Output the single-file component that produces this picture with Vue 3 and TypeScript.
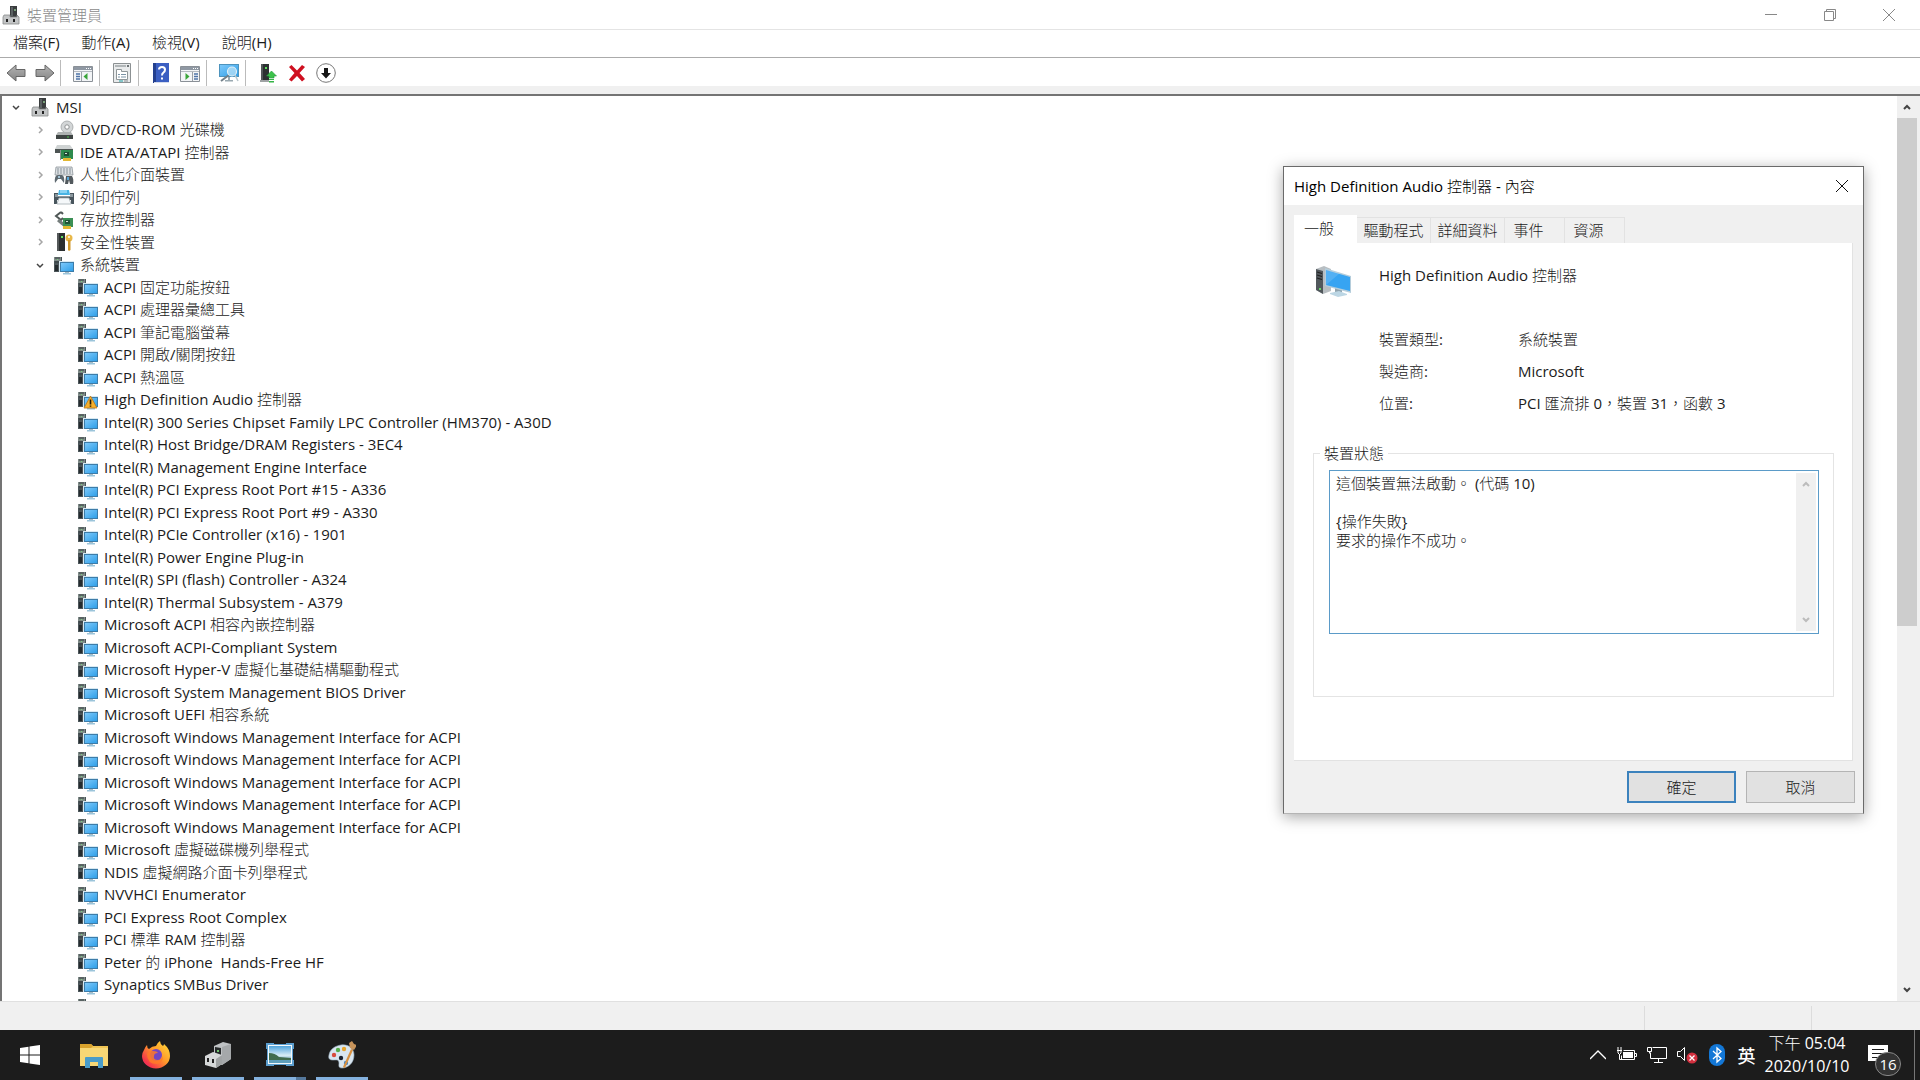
<script setup lang="ts">
import { ref } from 'vue'

interface Node {
  label: string
  level: number
  icon: string
  state?: 'open' | 'closed'
}

const menus = ['檔案(F)', '動作(A)', '檢視(V)', '說明(H)']

const toolGroups = [
  [{ id: 'back', name: '上一頁' }, { id: 'forward', name: '下一頁' }],
  [{ id: 'pane-left', name: '顯示/隱藏主控台樹狀目錄' }],
  [{ id: 'props', name: '內容' }],
  [{ id: 'help', name: '說明' }, { id: 'pane-right', name: '顯示/隱藏執行窗格' }],
  [{ id: 'scan', name: '掃描硬體變更' }],
  [{ id: 'update', name: '更新驅動程式' }, { id: 'remove', name: '解除安裝裝置' }, { id: 'disable', name: '停用裝置' }],
]

const categories: Node[] = [
  { label: 'MSI', level: 0, icon: 'machine', state: 'open' },
  { label: 'DVD/CD-ROM 光碟機', level: 1, icon: 'dvd', state: 'closed' },
  { label: 'IDE ATA/ATAPI 控制器', level: 1, icon: 'ide', state: 'closed' },
  { label: '人性化介面裝置', level: 1, icon: 'hid', state: 'closed' },
  { label: '列印佇列', level: 1, icon: 'printer', state: 'closed' },
  { label: '存放控制器', level: 1, icon: 'storage', state: 'closed' },
  { label: '安全性裝置', level: 1, icon: 'security', state: 'closed' },
  { label: '系統裝置', level: 1, icon: 'system', state: 'open' },
]

const devices = [
  'ACPI 固定功能按鈕',
  'ACPI 處理器彙總工具',
  'ACPI 筆記電腦螢幕',
  'ACPI 開啟/關閉按鈕',
  'ACPI 熱溫區',
  'High Definition Audio 控制器',
  'Intel(R) 300 Series Chipset Family LPC Controller (HM370) - A30D',
  'Intel(R) Host Bridge/DRAM Registers - 3EC4',
  'Intel(R) Management Engine Interface',
  'Intel(R) PCI Express Root Port #15 - A336',
  'Intel(R) PCI Express Root Port #9 - A330',
  'Intel(R) PCIe Controller (x16) - 1901',
  'Intel(R) Power Engine Plug-in',
  'Intel(R) SPI (flash) Controller - A324',
  'Intel(R) Thermal Subsystem - A379',
  'Microsoft ACPI 相容內嵌控制器',
  'Microsoft ACPI-Compliant System',
  'Microsoft Hyper-V 虛擬化基礎結構驅動程式',
  'Microsoft System Management BIOS Driver',
  'Microsoft UEFI 相容系統',
  'Microsoft Windows Management Interface for ACPI',
  'Microsoft Windows Management Interface for ACPI',
  'Microsoft Windows Management Interface for ACPI',
  'Microsoft Windows Management Interface for ACPI',
  'Microsoft Windows Management Interface for ACPI',
  'Microsoft 虛擬磁碟機列舉程式',
  'NDIS 虛擬網路介面卡列舉程式',
  'NVVHCI Enumerator',
  'PCI Express Root Complex',
  'PCI 標準 RAM 控制器',
  'Peter 的 iPhone  Hands-Free HF',
  'Synaptics SMBus Driver',
  '',
]

const nodes: Node[] = [
  ...categories,
  ...devices.map((label) => ({
    label,
    level: 2,
    icon: label.startsWith('High Definition') ? 'system-warn' : 'system',
  })),
]

const tabs = ['一般', '驅動程式', '詳細資料', '事件', '資源']
const activeTab = ref(0)

const facts = [
  ['裝置類型:', '系統裝置'],
  ['製造商:', 'Microsoft'],
  ['位置:', 'PCI 匯流排 0，裝置 31，函數 3'],
]

const status = ref('這個裝置無法啟動。 (代碼 10)\n\n{操作失敗}\n要求的操作不成功。')

const apps = [
  { id: 'explorer', name: '檔案總管', mode: '' },
  { id: 'firefox', name: 'Firefox', mode: 'running' },
  { id: 'devmgmt', name: '裝置管理員', mode: 'running' },
  { id: 'photos', name: '相片', mode: 'running multiple' },
  { id: 'paint', name: '小畫家', mode: 'running' },
]
</script>

<template>
  <div class="screen" lang="zh-Hant">
    <svg class="sprite" aria-hidden="true">
      <defs>
        <linearGradient id="g-blue" x1="0" y1="0" x2="1" y2="1">
          <stop offset="0" stop-color="#7cc8fa" /><stop offset="1" stop-color="#2f9fe8" />
        </linearGradient>
        <linearGradient id="g-grey" x1="0" y1="0" x2="0" y2="1">
          <stop offset="0" stop-color="#b4b4b4" /><stop offset="1" stop-color="#858585" />
        </linearGradient>
        <linearGradient id="g-fox" x1="1" y1="0" x2="0" y2="1">
          <stop offset="0" stop-color="#ffe23d" /><stop offset="0.45" stop-color="#ff9a2a" /><stop offset="0.8" stop-color="#f5374a" /><stop offset="1" stop-color="#e0207c" />
        </linearGradient>
        <linearGradient id="g-sky" x1="0" y1="0" x2="0" y2="1">
          <stop offset="0" stop-color="#4fa3dc" /><stop offset="0.55" stop-color="#d8edf6" /><stop offset="1" stop-color="#3c7c9c" />
        </linearGradient>
      </defs>

      <symbol id="machine" viewBox="0 0 20 20">
        <path d="M9 1h7v11H9z" fill="#3a3d3e" /><path d="M10 2h2v9h-2z" fill="#5b6163" /><path d="M13 4h2v2h-2z" fill="#78a07a" />
        <path d="M3 10h6v2h7v-2l2 2v7H2v-7z" fill="#c3c5c6" stroke="#888b8c" stroke-width=".8" />
        <path d="M5 14h2v3H5zM12 14h2v3h-2z" fill="#222" />
      </symbol>
      <symbol id="dvd" viewBox="0 0 20 20">
        <circle cx="13" cy="7" r="6" fill="#d3d6d7" stroke="#a0a3a4" stroke-width=".8" /><circle cx="13" cy="7" r="2.2" fill="#fff" stroke="#8e9192" />
        <path d="M4 12h13l2 3H2z" fill="#aeb2b2" /><path d="M2 15h17v4H2z" fill="#3e4443" /><path d="M13 16.500h2v1h-2z" fill="#4ec44e" />
      </symbol>
      <symbol id="ide" viewBox="0 0 20 20">
        <path d="M3 3h13l3 4H1z" fill="#cfd3d3" /><path d="M1 7h18v4H1z" fill="#4d5453" />
        <path d="M7 8h12v9H7z" fill="#2d8a4d" /><path d="M10 10h5v4h-5z" fill="#1d4d33" /><path d="M11 11h2v1h-2z" fill="#d9e6dc" />
        <path d="M9 16h8v3H9z" fill="#e2b832" /><path d="M6 8h1v10H6z" fill="#8d9492" />
      </symbol>
      <symbol id="hid" viewBox="0 0 20 20">
        <path d="M2 2h16l1 8H1z" fill="#dce0e3" stroke="#8d969b" stroke-width=".8" /><path d="M3 4h14M3 6h14M3 8h14" stroke="#89939a" stroke-dasharray="2 1" />
        <path d="M1 18q-1-8 3-8h4q3 1 2 8l-3-4H4z" fill="#5d686f" /><path d="M12 11h6q2 3 1 8h-3l-1-4-1 4h-3z" fill="#52595d" />
        <circle cx="5" cy="12" r="1" fill="#b9dff5" /><path d="M13 12h2v3h-2z" fill="#58a6d6" />
      </symbol>
      <symbol id="printer" viewBox="0 0 20 20">
        <path d="M5 3h10l1 5H4z" fill="#49b4e4" /><path d="M6 3h7v3H6z" fill="#8bd4f4" />
        <path d="M0 6h4v3h12V6h4v11h-3v-4H3v4H0z" fill="#48555d" /><path d="M1 7h3v2h12V7h3v3H1z" fill="#8b989e" />
        <path d="M5 11h10l2 6H3z" fill="#f5f8fa" stroke="#a3adb2" stroke-width=".8" />
      </symbol>
      <symbol id="storage" viewBox="0 0 20 20">
        <path d="M7 2 2 6l5 4 2-2M7 2l2 2" fill="none" stroke="#4f5756" stroke-width="2" /><path d="M4 10l6 5" stroke="#767e7d" stroke-width="3" />
        <path d="M9 8h10v9H9z" fill="#3b8f55" /><path d="M11 10h5v4h-5z" fill="#1f5436" /><path d="M12 11h2v1h-2z" fill="#cfe3d5" />
        <path d="M9 16h8v3H9z" fill="#e2b832" />
      </symbol>
      <symbol id="security" viewBox="0 0 20 20">
        <path d="M3 1h8v18H3z" fill="#2b2f30" /><path d="M3 1h2v18H3z" fill="#55595a" /><path d="M7 4h2v2H7z" fill="#5fe05f" />
        <circle cx="15" cy="6" r="3.500" fill="#e8b84a" /><circle cx="15" cy="5" r="1" fill="#fff" /><path d="M14 8h2.500v10L15 19l-1-1z" fill="#cf982c" />
      </symbol>
      <symbol id="system" viewBox="0 0 20 20">
        <path d="M0 2h8v15H0z" fill="#4b5559" /><path d="M0 2h7v4H0z" fill="#7f8b88" /><path d="M1 3h5M1 7h5" stroke="#353c3f" /><path d="M1 10h3v6H1z" fill="#252b2e" /><path d="M3 4h1v1H3z" fill="#7bd37b" />
        <path d="M5 6h15v11H5z" fill="#d8e9f2" /><path d="M6 7h14v10H6z" fill="#3d7ca8" /><path d="M7 8h12v8H7z" fill="url(#g-blue)" />
        <path d="M11 17h4v1h-4z" fill="#a8bcc6" /><path d="M9 18h8v1.500H9z" fill="#9bc4da" />
      </symbol>
      <symbol id="system-warn" viewBox="0 0 20 20">
        <use href="#system" />
        <path d="M12.500 6 19 18H6z" fill="#f6b02c" stroke="#b8741a" stroke-width=".8" stroke-linejoin="round" /><path d="M12.500 9.500v5M12.500 15.500v1.300" stroke="#1d1609" stroke-width="1.600" />
      </symbol>

      <symbol id="back" viewBox="0 0 20 20"><path d="M1 10 10 2v4.500h9v7h-9V18z" fill="url(#g-grey)" stroke="#666" /></symbol>
      <symbol id="forward" viewBox="0 0 20 20"><path d="M19 10 10 2v4.500H1v7h9V18z" fill="url(#g-grey)" stroke="#666" /></symbol>
      <symbol id="pane-left" viewBox="0 0 20 20">
        <path d="M.5 3.500h19v15H.5z" fill="#f3f5f7" stroke="#8a9097" /><path d="M1 4h18v3H1z" fill="#8f98a3" /><path d="M13 5.500h5" stroke="#fff" stroke-dasharray="1 1" /><path d="M1 8.500h18" stroke="#b4bac1" />
        <path d="M3 11h4M3 13.500h4M3 16h4" stroke="#4f74a8" stroke-width="1.300" /><path d="M8.500 9v9" stroke="#9aa1a8" /><path d="M14.500 10v7l-4-3.500z" fill="#3aa53a" />
      </symbol>
      <symbol id="pane-right" viewBox="0 0 20 20">
        <path d="M.5 3.500h19v15H.5z" fill="#f3f5f7" stroke="#8a9097" /><path d="M1 4h18v3H1z" fill="#8f98a3" /><path d="M13 5.500h5" stroke="#fff" stroke-dasharray="1 1" /><path d="M1 8.500h18" stroke="#b4bac1" />
        <path d="M14 11h4M14 13.500h4M14 16h4" stroke="#4f74a8" stroke-width="1.300" /><path d="M12.500 9v9" stroke="#9aa1a8" /><path d="M5.500 10v7l4-3.500z" fill="#3aa53a" />
      </symbol>
      <symbol id="props" viewBox="0 0 20 20">
        <path d="M1.500.5h17v19h-17z" fill="#e9ebec" stroke="#8c9193" /><path d="M3 3h11" stroke="#b1b6b8" stroke-width="2" /><path d="M15 3h2" stroke="#6d7375" stroke-width="2" />
        <path d="M4.500 6.500h5v2h6v8h-11z" fill="#fff" stroke="#8f9698" /><path d="M6 11.500h2M9 11.500h5M6 14h2M9 14h5" stroke="#7b93a5" /><path d="M7 18h4" stroke="#62b8bd" stroke-width="1.500" /><path d="M12 18h4" stroke="#a8adaf" stroke-width="1.500" />
      </symbol>
      <symbol id="help" viewBox="0 0 20 20">
        <path d="M2 0h16v20H2z" fill="#3b5fc2" /><path d="M2 0h3v20H2z" fill="#24408f" /><path d="M3 19h15v1H3z" fill="#d5dcec" />
        <path d="M8 6.500Q8 4 11 4t3 2.700Q14 8.500 12.500 9.500 11 10.500 11 12.500" fill="none" stroke="#fff" stroke-width="2" /><path d="M10 14.500h2v2h-2z" fill="#fff" />
      </symbol>
      <symbol id="scan" viewBox="0 0 20 20">
        <path d="M0 1h20v13H0z" fill="#4d93bd" /><path d="M1 2h18v11H1z" fill="url(#g-blue)" /><path d="M9 14h2v3H9zM6 17h8v1.500H6z" fill="#9aa9b1" />
        <path d="m10 12-8 6" stroke="#72808a" stroke-width="2" /><circle cx="13" cy="8.500" r="4.500" fill="#b9e0f5" fill-opacity=".75" stroke="#dfeff7" stroke-width="1.200" /><path d="m16 12 3 6" stroke="#b9c6cc" stroke-width="1.500" />
      </symbol>
      <symbol id="update" viewBox="0 0 20 20">
        <path d="M3 1h8v16H3z" fill="#2c3132" /><path d="M3 1h2v16H3z" fill="#53585a" /><path d="M7 4h2v2H7z" fill="#5fe05f" /><path d="M2 17h9v2H2z" fill="#9fa3a4" />
        <path d="m13.500 8 5 5H16v2h-5v-2H8.500z" fill="#3cc24a" stroke="#23963a" stroke-width=".6" /><path d="M11 16h5v1h-5zM11 18h5v1.500h-5z" fill="#35b447" />
      </symbol>
      <symbol id="remove" viewBox="0 0 20 20"><path d="M2 4 4.500 2l5.500 5.500L15 2l3 2-5.500 6L18 16l-3 2.500-5-5.500-5.500 5.500L2 16.500 7.500 10z" fill="#cf1020" /></symbol>
      <symbol id="disable" viewBox="0 0 20 20"><circle cx="10" cy="10" r="9.300" fill="#fff" stroke="#777" /><path d="M8 5h4v5h3l-5 5.500L5 10h3z" fill="#151515" /></symbol>

      <symbol id="device-big" viewBox="0 0 36 32">
        <path d="m1 4 8-3 7 3v22l-8 3-7-4z" fill="#b8bec2" /><path d="m1 4 7 2v23l-7-4z" fill="#51585c" /><path d="M2 7l5 1.500M2 10l5 1.500M2 13l5 1.500" stroke="#222" stroke-width="1.300" /><path d="M4 23h2v2H4z" fill="#6ad66a" />
        <path d="m20 22 7 2v5h-7z" fill="#8fa3ae" /><path d="m15 28 9-2 8 3v1l-9 2-8-3z" fill="#bcd6e4" />
        <path d="m10 3 26 8v17l-26-7z" fill="#b5cddb" /><path d="m11 5 24 7v14L11 20z" fill="#37a4f2" /><path d="M11 5v15l14-12z" fill="#fff" fill-opacity=".14" />
      </symbol>

      <symbol id="windows" viewBox="0 0 20 20"><path d="M0 3l8.500-1.300v7.800H0zM9.500 1.500 20 0v9.500H9.500zM0 10.500h8.500v7.800L0 17zM9.500 10.500H20V20L9.500 18.500z" fill="#fff" /></symbol>
      <symbol id="explorer" viewBox="0 0 28 28">
        <path d="M0 3h11l2 2h15v5H0z" fill="#f0c453" /><path d="M0 3h11l2 2-2 2H0z" fill="#d9a22c" /><path d="M0 7h28v18H0z" fill="#f8d775" />
        <path d="M5 27V17q0-1 1-1h16q1 0 1 1v10h-5v-6h-8v6z" fill="#4a9cc9" />
      </symbol>
      <symbol id="firefox" viewBox="0 0 28 28">
        <path d="M2 9q1-3 3-5 0 3 2 4 3-3 7-3 1-3 4-5 0 3 3 5 1-1 1-2 6 5 6 12a14 12.500 0 0 1-28 0q0-3 2-6z" fill="url(#g-fox)" />
        <circle cx="14" cy="14" r="6" fill="#7246c4" />
        <path d="M5 13q2-4 6-3 4 0 5 2-4 0-4 3-1 4 4 4 4-1 5-4 0 7-6 8-10 0-10-10z" fill="#ff7a28" fill-opacity=".85" />
      </symbol>
      <symbol id="devmgmt" viewBox="0 0 28 28">
        <path d="m10 5 9-4 8 2v15l-9 6-8-4z" fill="#bfc2c4" /><path d="m18 6 9-3v15l-9 6z" fill="#a5a8aa" /><path d="m11 6 6 1v9l-6-2z" fill="#26292a" /><path d="M13 9h2v2h-2z" fill="#6fc36f" />
        <path d="m1 15 8-4 9 3v9l-6 4-11-3z" fill="#d6d8d9" /><path d="m12 18 6-4v9l-6 4z" fill="#a0a3a4" /><path d="M3 17h2v4H3zM8 18h2v4H8z" fill="#222" />
      </symbol>
      <symbol id="photos" viewBox="0 0 28 28">
        <path d="M0 2h28v23H0z" fill="#5c9fd0" /><path d="M2 4h24v19H2z" fill="#f4f9fb" /><path d="M3 5h22v17H3z" fill="url(#g-sky)" /><path d="M3 12q6 0 10 4l12 1v2H3z" fill="#416c4d" /><path d="M3 19h22v3H3z" fill="#5f9fbd" />
        <path d="M0 8h1v11H0zM27 8h1v11h-1zM8 2h12v1H8zM8 24h12v1H8z" fill="#1c1c1c" />
      </symbol>
      <symbol id="paint" viewBox="0 0 28 28">
        <path d="M13 4c7-1 13 3 13 10 0 8-6 13-12 13-4 0-3-3-3-5 0-4-3-3-6-3-3 0-5-1-4-5C2 8 7 5 13 4z" fill="#d9e6f0" stroke="#9db4c5" stroke-width=".6" />
        <circle cx="6" cy="14" r="2.200" fill="#d84b3d" /><circle cx="10" cy="9" r="2.200" fill="#56ad4c" /><circle cx="16" cy="8" r="2.200" fill="#e7a52e" /><circle cx="13" cy="17" r="2.200" fill="#1c2330" /><circle cx="18" cy="22" r="2.200" fill="#3c87d0" />
        <path d="m23 8 2 1-8 18-2-1z" fill="#d89142" /><path d="m21 2 3-2 2 3 3 1-3 5-4-2z" fill="#c7935a" />
      </symbol>
      <symbol id="battery" viewBox="0 0 20 16">
        <path d="M6.500 3.500h11v9h-13v-4M17.500 6.500h2v3h-2" fill="none" stroke="#fff" /><path d="M6 5h10v6H6z" fill="#fff" /><path d="M1 0v3M4 0v3M0 3.500h5M1 4v2l1.500 1.500L4 6V4M2.500 7v5.500h3" fill="none" stroke="#fff" />
      </symbol>
      <symbol id="network" viewBox="0 0 20 16"><path d="M5.500.5h14v11h-16v-6M11.500 11.500v4M7 15.500h9M.5.500h4v4h-4zM2.500 4.500v2" fill="none" stroke="#fff" /></symbol>
      <symbol id="speaker" viewBox="0 0 22 20">
        <path d="M1.500 6.500h3l4-4v13l-4-4h-3z" fill="none" stroke="#fff" /><circle cx="16" cy="13" r="5.500" fill="#d3303f" /><path d="m13.500 10.500 5 5m0-5-5 5" stroke="#fff" stroke-width="1.300" />
      </symbol>
      <symbol id="bluetooth" viewBox="0 0 16 22"><rect width="16" height="22" rx="8" fill="#1377d6" /><path d="m4 7 8 7.500L8 18V4l4 3.500L4 15" fill="none" stroke="#fff" stroke-width="1.300" /></symbol>
    </svg>

    <main class="window">
      <header class="titlebar">
        <svg class="icon"><use href="#machine" /></svg>
        <h1>裝置管理員</h1>
        <div class="caption-buttons">
          <button aria-label="最小化"><svg viewBox="0 0 12 12"><path d="M0 5.500h12" /></svg></button>
          <button aria-label="還原"><svg viewBox="0 0 12 12"><path d="M.5 2.500h9v9h-9zM2.500 2.500v-2h9v9h-2" /></svg></button>
          <button aria-label="關閉"><svg viewBox="0 0 12 12"><path d="m0 0 12 12M12 0 0 12" /></svg></button>
        </div>
      </header>

      <nav class="menubar">
        <button v-for="m in menus" :key="m">{{ m }}</button>
      </nav>

      <div class="toolbar" role="toolbar">
        <div v-for="(group, i) in toolGroups" :key="i" class="tool-group">
          <button v-for="tool in group" :key="tool.id" :aria-label="tool.name">
            <svg class="icon"><use :href="'#' + tool.id" /></svg>
          </button>
        </div>
      </div>

      <section class="pane">
        <ul class="tree" role="tree">
          <li v-for="(node, i) in nodes" :key="i" :class="'level-' + node.level" role="treeitem">
            <button v-if="node.state" class="toggle" :class="node.state" :aria-label="node.label">
              <svg viewBox="0 0 10 10"><path :d="node.state === 'open' ? 'm2 4 3 3 3-3' : 'm4 2 3 3-3 3'" /></svg>
            </button>
            <span v-else class="toggle"></span>
            <svg class="icon"><use :href="'#' + node.icon" /></svg>
            <span class="label">{{ node.label }}</span>
          </li>
        </ul>
        <div class="scrollbar">
          <button aria-label="向上"><svg viewBox="0 0 10 10"><path d="m2 7 3-3 3 3" /></svg></button>
          <div class="track"><div class="thumb"></div></div>
          <button aria-label="向下"><svg viewBox="0 0 10 10"><path d="m2 3 3 3 3-3" /></svg></button>
        </div>
      </section>

      <footer class="statusbar"><span></span><span></span><span></span></footer>
    </main>

    <section class="dialog" role="dialog" aria-labelledby="dialog-title">
      <header class="dialog-title">
        <h2 id="dialog-title">High Definition Audio 控制器 - 內容</h2>
        <button aria-label="關閉"><svg viewBox="0 0 12 12"><path d="m0 0 12 12M12 0 0 12" /></svg></button>
      </header>
      <div class="tabs" role="tablist">
        <button
          v-for="(tab, i) in tabs"
          :key="tab"
          role="tab"
          :class="{ active: i === activeTab, wide: tab.length > 2 }"
          :aria-selected="i === activeTab"
          @click="activeTab = i"
        >{{ tab }}</button>
      </div>
      <div class="sheet">
        <div class="device">
          <svg><use href="#device-big" /></svg>
          <span>High Definition Audio 控制器</span>
        </div>
        <dl class="facts">
          <template v-for="[term, value] in facts" :key="term">
            <dt>{{ term }}</dt>
            <dd>{{ value }}</dd>
          </template>
        </dl>
        <fieldset class="group">
          <legend><label for="device-status">裝置狀態</label></legend>
          <div class="status-box">
            <textarea id="device-status" v-model="status" readonly></textarea>
            <div class="scrollbar disabled">
              <button disabled aria-label="向上"><svg viewBox="0 0 10 10"><path d="m2 7 3-3 3 3" /></svg></button>
              <div class="track"></div>
              <button disabled aria-label="向下"><svg viewBox="0 0 10 10"><path d="m2 3 3 3 3-3" /></svg></button>
            </div>
          </div>
        </fieldset>
      </div>
      <div class="actions">
        <button class="primary">確定</button>
        <button>取消</button>
      </div>
    </section>

    <nav class="taskbar">
      <button class="start" aria-label="開始"><svg><use href="#windows" /></svg></button>
      <button v-for="app in apps" :key="app.id" class="app" :class="app.mode" :aria-label="app.name">
        <svg><use :href="'#' + app.id" /></svg>
      </button>
      <div class="tray">
        <button class="more" aria-label="顯示隱藏的圖示"><svg viewBox="0 0 16 10"><path d="m0 9 8-8 8 8" fill="none" stroke="#fff" stroke-width="1.300" /></svg></button>
        <button class="battery" aria-label="電源"><svg><use href="#battery" /></svg></button>
        <button class="network" aria-label="網路"><svg><use href="#network" /></svg></button>
        <button class="speaker" aria-label="喇叭"><svg><use href="#speaker" /></svg></button>
        <button class="bluetooth" aria-label="藍牙"><svg><use href="#bluetooth" /></svg></button>
        <button class="ime">英</button>
        <button class="clock"><span>下午 05:04</span><span>2020/10/10</span></button>
        <button class="notes" aria-label="通知">
          <svg viewBox="0 0 20 20"><path d="M0 0h20v16h-8l-4 4v-4H0z" fill="#fff" /><path d="M4 4.500h12M4 8.500h12M4 12.500h8" stroke="#1c1c1c" /></svg>
          <span class="badge">16</span>
        </button>
        <span class="peek"></span>
      </div>
    </nav>
  </div>
</template>

<style>
body {
  margin: 0;
  overflow: hidden;
}
</style>

<style scoped>
.screen {
  position: relative;
  display: flex;
  flex-direction: column;
  height: 100vh;
  color: #1b1b1b;
  background: #fff;
  font: 15px/20px "Open Sans", "Noto Sans CJK TC Light", "Noto Sans CJK TC", sans-serif;
}

.screen * {
  box-sizing: border-box;
}

.sprite {
  position: absolute;
  width: 0;
  height: 0;
}

button {
  display: flex;
  align-items: center;
  justify-content: center;
  flex: none;
  margin: 0;
  padding: 0;
  border: 0;
  background: none;
  color: inherit;
  font: inherit;
}

h1,
h2 {
  margin: 0;
  font: inherit;
}

.icon {
  flex: none;
  width: 20px;
  height: 20px;
}

.window {
  display: flex;
  flex: 1;
  flex-direction: column;
  min-height: 0;
}

.titlebar {
  display: flex;
  flex: none;
  align-items: center;
  gap: 6px;
  height: 30px;
  padding-left: 1px;
  border-bottom: 1px solid #e4e4e4;
}

.titlebar h1 {
  color: #8a8a8a;
}

.caption-buttons {
  display: flex;
  margin-left: auto;
  padding-right: 2px;
}

.caption-buttons button {
  width: 59px;
  height: 28px;
}

.caption-buttons svg,
.dialog-title svg {
  width: 12px;
  height: 12px;
  fill: none;
  stroke: #888;
}

.menubar {
  display: flex;
  flex: none;
  align-items: center;
  gap: 22px;
  height: 28px;
  padding: 0 13px 4px;
  border-bottom: 1px solid #ababab;
}

.toolbar {
  display: flex;
  flex: none;
  align-items: center;
  height: 36px;
  padding: 2px 0 0 1px;
  border-bottom: 8px solid #f0f0f0;
}

.tool-group {
  display: flex;
  gap: 9px;
  height: 26px;
  padding: 0 6px 0 12px;
  align-items: center;
  border-right: 1px solid #bbb;
}

.tool-group:first-child {
  padding: 0 5px;
}

.tool-group:last-child {
  border: 0;
}

.pane {
  display: flex;
  flex: 1;
  min-height: 0;
  border: solid #747474;
  border-width: 2px 0 0 2px;
}

.tree {
  flex: 1;
  margin: 0;
  padding: 0;
  overflow: hidden;
  list-style: none;
}

.tree li {
  display: flex;
  align-items: center;
  height: 22px;
}

.tree li:nth-child(even) {
  height: 23px;
}

.level-0 {
  padding-left: 4px;
}

.level-1 {
  padding-left: 28px;
}

.level-2 {
  padding-left: 52px;
}

.toggle {
  width: 20px;
  height: 20px;
  margin-right: 4px;
}

.toggle svg,
.scrollbar svg {
  width: 10px;
  height: 10px;
  fill: none;
  stroke: #444;
  stroke-width: 1.5;
}

.toggle.closed svg {
  stroke: #a6a6a6;
}

.label {
  margin-left: 6px;
  padding-bottom: 1px;
  white-space: pre;
}

.scrollbar {
  display: flex;
  flex: none;
  flex-direction: column;
  width: 23px;
  padding-right: 3px;
  background: #f0f0f0;
}

.scrollbar button {
  height: 22px;
}

.scrollbar svg {
  stroke-width: 2;
}

.track {
  flex: 1;
}

.thumb {
  height: 59%;
  background: #cdcdcd;
}

.statusbar {
  display: flex;
  flex: none;
  height: 29px;
  padding-top: 4px;
  border-top: 1px solid #e0e0e0;
  background: #f0f0f0;
}

.statusbar span {
  width: 167px;
  border-right: 1px solid #dcdcdc;
}

.statusbar span:first-child {
  flex: 1;
}

.statusbar span:last-child {
  width: 108px;
  border: 0;
}

.dialog {
  position: absolute;
  top: 166px;
  right: 56px;
  display: flex;
  flex-direction: column;
  width: 581px;
  border: 1px solid #6a6a6a;
  border-bottom-color: #b4b4b4;
  background: #f0f0f0;
  box-shadow: 0 3px 14px rgb(0 0 0 / 35%);
}

.dialog-title {
  display: flex;
  align-items: center;
  justify-content: space-between;
  height: 38px;
  padding: 0 15px 1px 10px;
  background: #fff;
  color: #000;
}

.dialog-title svg {
  stroke: #111;
}

.tabs {
  display: flex;
  align-items: flex-end;
  height: 38px;
  padding: 0 10px;
}

.tabs button {
  width: 60px;
  height: 26px;
  padding: 0 12px 2px 0;
  border: solid #e2e2e2;
  border-width: 1px 1px 0 0;
}

.tabs .wide {
  width: 74px;
  padding: 0 0 2px;
}

.tabs .active {
  width: 63px;
  height: 28px;
  padding-bottom: 4px;
  border-color: #fff;
  background: #fff;
}

.sheet {
  margin: 0 10px;
  padding: 22px 18px 63px 19px;
  border-right: 1px solid #e2e2e2;
  border-bottom: 1px solid #e2e2e2;
  background: #fff;
}

.device {
  display: flex;
  gap: 28px;
}

.device svg {
  width: 36px;
  height: 32px;
  margin-left: 2px;
}

.facts {
  display: grid;
  grid-template-columns: 139px 1fr;
  row-gap: 12px;
  margin: 32px 0 30px 66px;
}

.facts dd {
  margin: 0;
}

.group {
  height: 254px;
  min-width: 0;
  margin: 0;
  padding: 7px 14px 0 15px;
  border: 1px solid #e4e4e4;
}

.group legend {
  margin-left: -9px;
  padding: 0 4px;
}

.status-box {
  display: flex;
  height: 164px;
  padding: 2px;
  border: 1px solid #5b9bc8;
}

.status-box textarea {
  flex: 1;
  min-width: 0;
  padding: 1px 4px;
  border: 0;
  outline: 0;
  color: inherit;
  background: #fff;
  font: inherit;
  line-height: 19px;
  resize: none;
}

.scrollbar.disabled {
  width: 20px;
  padding: 0;
}

.disabled svg {
  stroke: #bcbcbc;
}

.actions {
  display: flex;
  justify-content: flex-end;
  gap: 10px;
  padding: 10px 8px;
}

.actions button {
  width: 109px;
  height: 32px;
  border: 1px solid #b4b4b4;
  background: #e1e1e1;
}

.actions .primary {
  border: 2px solid #3b82bd;
}

.taskbar {
  display: flex;
  flex: none;
  height: 50px;
  background: #1c1c1c;
  color: #fff;
}

.start {
  width: 60px;
}

.start svg {
  width: 20px;
  height: 20px;
}

.app {
  width: 52px;
  margin: 0 5px;
  border-top: 3px solid transparent;
  border-bottom: 3px solid transparent;
}

.start + .app {
  margin-left: 8px;
}

.app svg {
  width: 28px;
  height: 28px;
}

.running {
  border-bottom-color: #84b1de;
}

.multiple {
  border-image: linear-gradient(to right, #84b1de 78%, #55789c 78%) 3;
  border-top: 0;
  padding-top: 3px;
}

.tray {
  display: flex;
  margin-left: auto;
}

.more {
  width: 28px;
}

.more svg {
  width: 16px;
  height: 10px;
}

.battery,
.network,
.speaker {
  width: 30px;
}

.battery svg,
.network svg {
  width: 20px;
  height: 16px;
}

.speaker svg {
  width: 22px;
  height: 20px;
}

.bluetooth {
  width: 30px;
}

.bluetooth svg {
  width: 16px;
  height: 22px;
}

.ime {
  width: 29px;
  font-family: "Noto Sans CJK TC", sans-serif;
  font-size: 18px;
  font-weight: 500;
}

.clock {
  flex-direction: column;
  width: 92px;
  font-size: 16px;
  line-height: 23px;
}

.notes {
  position: relative;
  width: 61px;
  padding-right: 11px;
}

.notes svg {
  width: 20px;
  height: 20px;
}

.badge {
  position: absolute;
  top: 22px;
  left: 22px;
  width: 26px;
  height: 24px;
  border: 1px solid #888;
  border-radius: 12px;
  background: #333;
  line-height: 22px;
}

.peek {
  width: 6px;
  border-left: 1px solid #777;
}
</style>
